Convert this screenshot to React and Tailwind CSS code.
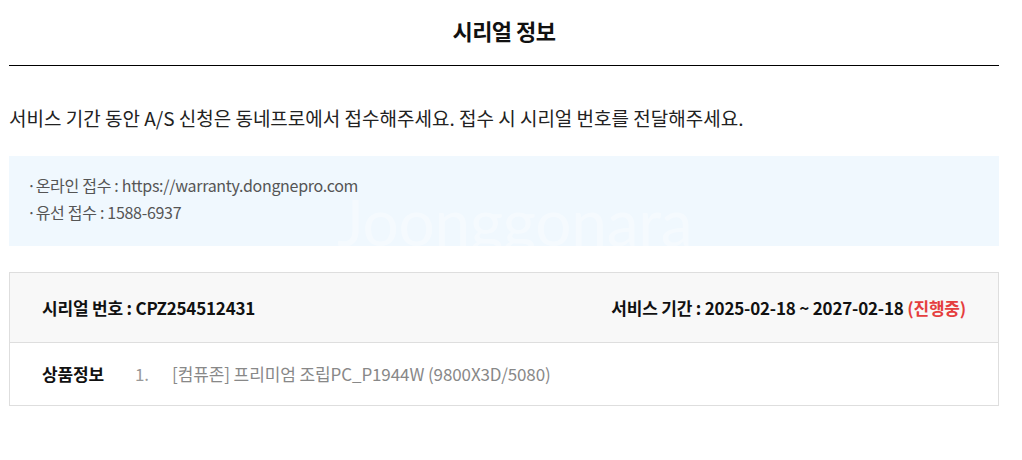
export default function App() {
  return (
    <div className="min-h-screen bg-white" style={{ fontFamily: '"Noto Sans CJK KR", "Noto Sans", sans-serif' }}>
      <div className="ml-[9px] w-[990px]">
        {/* Title */}
        <div className="border-b border-black pt-[14px] pb-[18px] text-center">
          <h1 className="text-[22px] leading-[33px] font-bold tracking-[-0.5px] text-[#111]">시리얼 정보</h1>
        </div>

        <p className="mt-[38px] text-[19px] leading-[28px] tracking-[0px] text-[#222]">
          서비스 기간 동안 A/S 신청은 동네프로에서 접수해주세요. 접수 시 시리얼 번호를 전달해주세요.
        </p>

        {/* Info box */}
        <div className="relative mt-[24px] h-[90px] overflow-hidden bg-[#f0f8fe] pl-[18px] pt-[16px] text-[16px] leading-[27px] tracking-[-0.3px] text-[#555]">
          <p>·온라인 접수 : https://warranty.dongnepro.com</p>
          <p>·유선 접수 : 1588-6937</p>
          <span className="pointer-events-none absolute left-[328px] top-[34px] text-[64px] leading-none text-white/35" style={{ fontFamily: 'Lato, sans-serif' }}>
            Joonggonara
          </span>
        </div>

        {/* Serial table */}
        <div className="mt-[26px] border border-[#dedede]">
          <div className="flex h-[70px] items-center justify-between border-b border-[#dedede] bg-[#f8f8f8] px-[32px] text-[17px] font-bold tracking-[-0.2px] text-[#111]">
            <span>시리얼 번호 : CPZ254512431</span>
            <span>
              서비스 기간 : 2025-02-18 ~ 2027-02-18 <span className="text-[#e53e3e]">(진행중)</span>
            </span>
          </div>
          <div className="flex h-[62px] items-center px-[32px] text-[17px] tracking-[-0.1px]">
            <span className="w-[93px] font-bold text-[#111]">상품정보</span>
            <span className="w-[37px] text-[#999]">1.</span>
            <span className="text-[#888]">[컴퓨존] 프리미엄 조립PC_P1944W (9800X3D/5080)</span>
          </div>
        </div>
      </div>
    </div>
  )
}
